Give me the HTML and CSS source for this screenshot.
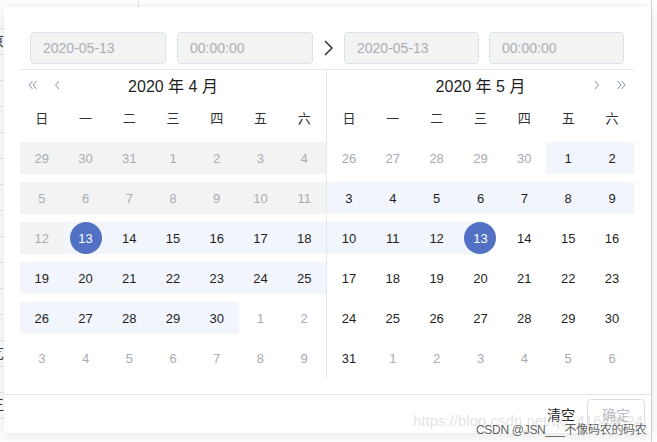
FILE: index.html
```html
<!DOCTYPE html>
<html lang="zh-CN">
<head>
    <meta charset="UTF-8">
    <meta name="viewport" content="width=device-width, initial-scale=1.0">
    <title>日期时间范围选择</title>
    <link rel="stylesheet" href="styles.css">
</head>
<body>
    <div class="page">
        <div class="page-top"></div>
        <div class="page-rows">
            <div class="page-row first"></div>
            <div class="page-row"><span>京</span></div>
            <div class="page-row"></div>
            <div class="page-row"></div>
            <div class="page-row"></div>
            <div class="page-row"></div>
            <div class="page-row"></div>
            <div class="page-row"></div>
            <div class="page-row"></div>
            <div class="page-row"></div>
            <div class="page-row"></div>
            <div class="page-row"></div>
            <div class="page-row"></div>
            <div class="page-row"><span>乞</span></div>
            <div class="page-row"></div>
            <div class="page-row"><span>王</span></div>
            <div class="page-row"></div>
        </div>
        <div class="page-edge"></div>
    </div>

    <div class="picker">
        <div class="picker-content">
            <div class="time-header">
                <div class="field">2020-05-13</div>
                <div class="field gap">00:00:00</div>
                <div class="range-arrow">
                    <svg width="9" height="16" viewBox="0 0 9 16"><path d="M1 1 L8 8 L1 15" fill="none" stroke="#303133" stroke-width="1.5"/></svg>
                </div>
                <div class="field">2020-05-13</div>
                <div class="field gap">00:00:00</div>
            </div>

            <div class="months">
                <div class="month left">
                    <div class="month-header">
                        <div class="nav">
                            <svg width="9" height="10" viewBox="0 0 9 10"><path d="M4.5 1 L1 5 L4.5 9 M8.5 1 L5 5 L8.5 9" fill="none" stroke="#8a93a6" stroke-width="1"/></svg>
                            <svg class="single" width="6" height="10" viewBox="0 0 6 10"><path d="M5 1 L1.5 5 L5 9" fill="none" stroke="#8a93a6" stroke-width="1"/></svg>
                        </div>
                        <div class="month-title">2020 年 4 月</div>
                        <div></div>
                    </div>
                    <div class="days">
                        <div class="wd">日</div><div class="wd">一</div><div class="wd">二</div><div class="wd">三</div><div class="wd">四</div><div class="wd">五</div><div class="wd">六</div>

                        <div class="cell disabled"><span>29</span></div>
                        <div class="cell disabled"><span>30</span></div>
                        <div class="cell disabled"><span>31</span></div>
                        <div class="cell disabled"><span>1</span></div>
                        <div class="cell disabled"><span>2</span></div>
                        <div class="cell disabled"><span>3</span></div>
                        <div class="cell disabled"><span>4</span></div>

                        <div class="cell disabled"><span>5</span></div>
                        <div class="cell disabled"><span>6</span></div>
                        <div class="cell disabled"><span>7</span></div>
                        <div class="cell disabled"><span>8</span></div>
                        <div class="cell disabled"><span>9</span></div>
                        <div class="cell disabled"><span>10</span></div>
                        <div class="cell disabled"><span>11</span></div>

                        <div class="cell disabled"><span>12</span></div>
                        <div class="cell in start"><span>13</span></div>
                        <div class="cell in"><span>14</span></div>
                        <div class="cell in"><span>15</span></div>
                        <div class="cell in"><span>16</span></div>
                        <div class="cell in"><span>17</span></div>
                        <div class="cell in"><span>18</span></div>

                        <div class="cell in"><span>19</span></div>
                        <div class="cell in"><span>20</span></div>
                        <div class="cell in"><span>21</span></div>
                        <div class="cell in"><span>22</span></div>
                        <div class="cell in"><span>23</span></div>
                        <div class="cell in"><span>24</span></div>
                        <div class="cell in"><span>25</span></div>

                        <div class="cell in"><span>26</span></div>
                        <div class="cell in"><span>27</span></div>
                        <div class="cell in"><span>28</span></div>
                        <div class="cell in"><span>29</span></div>
                        <div class="cell in"><span>30</span></div>
                        <div class="cell other"><span>1</span></div>
                        <div class="cell other"><span>2</span></div>

                        <div class="cell other"><span>3</span></div>
                        <div class="cell other"><span>4</span></div>
                        <div class="cell other"><span>5</span></div>
                        <div class="cell other"><span>6</span></div>
                        <div class="cell other"><span>7</span></div>
                        <div class="cell other"><span>8</span></div>
                        <div class="cell other"><span>9</span></div>
                    </div>
                </div>

                <div class="month right">
                    <div class="month-header">
                        <div></div>
                        <div class="month-title">2020 年 5 月</div>
                        <div class="nav end">
                            <svg class="single" width="6" height="10" viewBox="0 0 6 10"><path d="M1 1 L4.5 5 L1 9" fill="none" stroke="#7d8bb3" stroke-width="1"/></svg>
                            <svg width="9" height="10" viewBox="0 0 9 10"><path d="M0.5 1 L4 5 L0.5 9 M4.5 1 L8 5 L4.5 9" fill="none" stroke="#7d8bb3" stroke-width="1"/></svg>
                        </div>
                    </div>
                    <div class="days">
                        <div class="wd">日</div><div class="wd">一</div><div class="wd">二</div><div class="wd">三</div><div class="wd">四</div><div class="wd">五</div><div class="wd">六</div>

                        <div class="cell other"><span>26</span></div>
                        <div class="cell other"><span>27</span></div>
                        <div class="cell other"><span>28</span></div>
                        <div class="cell other"><span>29</span></div>
                        <div class="cell other"><span>30</span></div>
                        <div class="cell in"><span>1</span></div>
                        <div class="cell in"><span>2</span></div>

                        <div class="cell in"><span>3</span></div>
                        <div class="cell in"><span>4</span></div>
                        <div class="cell in"><span>5</span></div>
                        <div class="cell in"><span>6</span></div>
                        <div class="cell in"><span>7</span></div>
                        <div class="cell in"><span>8</span></div>
                        <div class="cell in"><span>9</span></div>

                        <div class="cell in"><span>10</span></div>
                        <div class="cell in"><span>11</span></div>
                        <div class="cell in"><span>12</span></div>
                        <div class="cell end"><span>13</span></div>
                        <div class="cell"><span>14</span></div>
                        <div class="cell"><span>15</span></div>
                        <div class="cell"><span>16</span></div>

                        <div class="cell"><span>17</span></div>
                        <div class="cell"><span>18</span></div>
                        <div class="cell"><span>19</span></div>
                        <div class="cell"><span>20</span></div>
                        <div class="cell"><span>21</span></div>
                        <div class="cell"><span>22</span></div>
                        <div class="cell"><span>23</span></div>

                        <div class="cell"><span>24</span></div>
                        <div class="cell"><span>25</span></div>
                        <div class="cell"><span>26</span></div>
                        <div class="cell"><span>27</span></div>
                        <div class="cell"><span>28</span></div>
                        <div class="cell"><span>29</span></div>
                        <div class="cell"><span>30</span></div>

                        <div class="cell"><span>31</span></div>
                        <div class="cell other"><span>1</span></div>
                        <div class="cell other"><span>2</span></div>
                        <div class="cell other"><span>3</span></div>
                        <div class="cell other"><span>4</span></div>
                        <div class="cell other"><span>5</span></div>
                        <div class="cell other"><span>6</span></div>
                    </div>
                </div>
            </div>
        </div>

        <div class="footer">
            <span class="clear-btn">清空</span>
            <button class="ok-btn">确定</button>
        </div>
    </div>

    <div class="watermark">
        <span class="wm-url">https://blog.csdn.net/qq_41648624</span>
        <span class="wm-name">CSDN @JSN___不像码农的码农</span>
    </div>
</body>
</html>
```

FILE: styles.css
```css
body {
    margin: 0;
    width: 657px;
    height: 442px;
    overflow: hidden;
    position: relative;
    background: #fff;
    font-family: "Liberation Sans", "Noto Sans CJK SC", sans-serif;
    color: #1f1f1f;
}
.page {
    height: 442px;
}
.page-top {
    height: 7px;
    margin-left: 138px;
    width: 280px;
    border-left: 1px solid #e4e4e4;
}
.page-rows {
    width: 20px;
}
.page-row {
    height: 25px;
    border-bottom: 1px solid #e6e8f0;
    font-size: 14px;
    line-height: 25px;
    text-indent: -10px;
    color: #333;
}
.page-row.first {
    height: 21px;
}
.page-edge {
    position: absolute;
    top: 0;
    right: 5px;
    width: 1px;
    height: 442px;
    background: #d6d6d6;
}

/* picker popup */
.picker {
    position: absolute;
    left: 4px;
    top: 7px;
    width: 647px;
    background: #fff;
    box-shadow: 0 2px 12px rgba(0, 0, 0, 0.12);
}
.picker-content {
    margin: 0 17px 0 16px;
    padding-bottom: 16px;
}
.time-header {
    display: flex;
    align-items: center;
    padding: 25px 10px 5px;
    border-bottom: 1px solid #e4e7ed;
}
.field {
    width: 136px;
    height: 32px;
    box-sizing: border-box;
    padding: 0 12px;
    border: 1px solid #dde1ea;
    border-radius: 4px;
    background: #f2f3f3;
    color: #abadb3;
    font-size: 14px;
    line-height: 30px;
}
.field.gap {
    margin-left: 11px;
}
.range-arrow {
    width: 31px;
    display: flex;
    justify-content: center;
    align-items: center;
}
.range-arrow + .field {
    width: 135px;
}
.range-arrow + .field + .field {
    width: 135px;
    margin-left: 10px;
}

.months {
    display: flex;
}
.month {
    width: 307px;
}
.month.left {
    width: 306px;
    border-right: 1px solid #e4e7ed;
}
.month-header {
    height: 30px;
    display: grid;
    grid-template-columns: 1fr auto 1fr;
    align-items: center;
}
.month-title {
    font-size: 16px;
}
.nav {
    display: flex;
    align-items: center;
    gap: 17px;
    padding: 0 8px;
}
.nav.end {
    justify-content: flex-end;
}
.nav svg {
    display: block;
}
.days {
    display: grid;
    grid-template-columns: repeat(7, 1fr);
    font-size: 13px;
}
.wd {
    height: 38px;
    line-height: 38px;
    text-align: center;
    color: #303133;
}
.cell {
    height: 32px;
    margin: 4px 0;
    display: flex;
    align-items: center;
    justify-content: center;
    color: #1f1f1f;
}
.cell.disabled {
    background: #f2f3f3;
    color: #a8abb2;
}
.cell.other {
    color: #a8abb2;
}
.cell.in {
    background: #f2f6fc;
}
.cell.end {
    background: linear-gradient(to right, #f2f6fc 50%, transparent 50%);
}
.cell.start span, .cell.end span {
    width: 32px;
    height: 32px;
    border-radius: 50%;
    background: #5271c4;
    color: #fff;
    display: flex;
    align-items: center;
    justify-content: center;
}

.footer {
    display: flex;
    justify-content: flex-end;
    align-items: center;
    gap: 12px;
    padding: 4px 6px;
    border-top: 1px solid #e4e7ed;
}
.clear-btn {
    font-size: 14px;
    color: #1f1f1f;
}
.ok-btn {
    width: 58px;
    height: 30px;
    border: 1px solid #dcdfe6;
    border-radius: 4px;
    background: #fff;
    color: #b8bcc4;
    font-family: "Liberation Sans", "Noto Sans CJK SC", sans-serif;
    font-size: 14px;
    padding: 0;
}

.watermark {
    position: absolute;
    left: 413px;
    top: 412px;
    width: 240px;
    height: 26px;
    pointer-events: none;
}
.wm-url {
    position: absolute;
    left: 0;
    top: 0;
    font-size: 15px;
    color: rgba(200, 200, 200, 0.5);
    white-space: nowrap;
}
.wm-name {
    position: absolute;
    left: 63px;
    top: 8px;
    font-size: 12px;
    letter-spacing: -0.3px;
    color: #5e5e5e;
    white-space: nowrap;
    text-shadow: 0 0 2px #fff, 0 0 2px #fff;
}
```
